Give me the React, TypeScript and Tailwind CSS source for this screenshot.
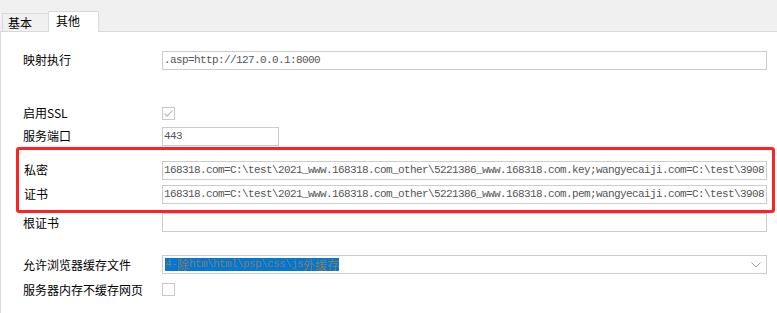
const label = "text-[12px] leading-none text-black [font-family:'Noto_Sans_CJK_SC','Noto_Sans',sans-serif]";
const mono = "[font-family:'Liberation_Mono','Noto_Sans_CJK_SC',monospace] text-[11px] tracking-[-0.6px] text-[#555555]";

function TextBox({ value, className = "" }: { value: string; className?: string }) {
  return (
    <div
      className={`flex h-[19px] items-center overflow-hidden whitespace-nowrap border border-[#cccccc] bg-white pl-[1px] ${className}`}
    >
      <span className={mono}>{value}</span>
    </div>
  );
}

function CheckBox({ checked }: { checked?: boolean }) {
  return (
    <div className="flex h-[13px] w-[13px] items-center justify-center border border-[#c8c8c8] bg-white">
      {checked && (
        <svg width="11" height="11" viewBox="0 0 11 11">
          <path d="M1.5 5.5 L4.2 8.2 L9.5 2.5" fill="none" stroke="#b4b4b4" strokeWidth="1.1" />
        </svg>
      )}
    </div>
  );
}

function Row({ text, h, children, w = "w-[139px]" }: { text: string; h: string; children: React.ReactNode; w?: string }) {
  return (
    <div className={`flex items-center ${h}`}>
      <div className={`${w} shrink-0 ${label}`}>{text}</div>
      <div className="min-w-0 flex-1">{children}</div>
    </div>
  );
}

export default function App() {
  // only the part that is visible in the box
  const keyPath = "168318.com=C:\\test\\2021_www.168318.com_other\\5221386_www.168318.com.key;wangyecaiji.com=C:\\test\\3908";
  const pemPath = "168318.com=C:\\test\\2021_www.168318.com_other\\5221386_www.168318.com.pem;wangyecaiji.com=C:\\test\\3908";

  return (
    <div className="h-[313px] w-[777px] overflow-hidden bg-white">
      {/* tab strip */}
      <div className="flex h-[32px] items-end border-b border-[#d9d9d9] bg-[#f0f0f0] pl-[2px]">
        <div className={`flex h-[18px] w-[46px] items-center border-l border-t border-[#d9d9d9] pl-[5px] ${label}`}>基本</div>
        <div
          className={`relative -mb-[1px] flex h-[21px] w-[51px] items-center border-x border-t border-[#d9d9d9] bg-white pb-[2px] pl-[7px] ${label}`}
        >
          其他
        </div>
      </div>

      {/* panel */}
      <div className="flex h-[281px] flex-col border-l border-[#d9d9d9] pl-[22px] pr-[10px] pt-[16px]">
        <Row text="映射执行" h="h-[24px]">
          <TextBox value=".asp=http://127.0.0.1:8000" />
        </Row>

        <div className="h-[29px]" />

        <Row text="启用SSL" h="h-[24px]">
          <CheckBox checked />
        </Row>
        <Row text="服务端口" h="h-[22px]">
          <TextBox value="443" className="w-[117px]" />
        </Row>

        <div className="-ml-[7px] -mr-[8px] h-[66px] rounded-[3px] border-[3px] border-[#ff2222] px-[5px] pt-[8px]">
          <Row text="私密" h="h-[24px]" w="w-[138px]">
            <TextBox value={keyPath} />
          </Row>
          <Row text="证书" h="h-[24px]" w="w-[138px]">
            <TextBox value={pemPath} />
          </Row>
        </div>

        <Row text="根证书" h="h-[19px]">
          <TextBox value="" />
        </Row>

        <div className="h-[23px]" />

        <Row text="允许浏览器缓存文件" h="h-[19px]">
          <div className="relative flex h-[19px] items-center border border-[#cccccc] bg-white pl-[2px]">
            <span className="flex h-[13px] items-center whitespace-nowrap bg-[#0078d7] text-[#8a7a58]">
              <span className={`${mono} !text-[#8a7a58]`}>4-</span>
              <span className="[font-family:'Noto_Sans_CJK_SC',sans-serif] text-[12px] leading-none">除</span>
              <span className={`${mono} !text-[#8a7a58]`}>htm\html\psp\css\js</span>
              <span className="[font-family:'Noto_Sans_CJK_SC',sans-serif] text-[12px] leading-none">外缓存</span>
            </span>
            <svg className="absolute right-[5px] top-[6px]" width="10" height="6" viewBox="0 0 10 6">
              <path d="M0.5 0.5 L5 5 L9.5 0.5" fill="none" stroke="#a0a0a0" strokeWidth="1" />
            </svg>
          </div>
        </Row>

        <div className="h-[9px]" />

        <Row text="服务器内存不缓存网页" h="h-[13px]">
          <CheckBox />
        </Row>
      </div>
    </div>
  );
}
